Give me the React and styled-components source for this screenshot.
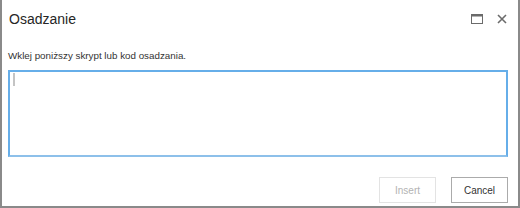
import React from 'react'
import styled, { createGlobalStyle } from 'styled-components'

const Global = createGlobalStyle`
  html, body { margin: 0; padding: 0; background: #fff; }
  body { font-family: "Liberation Sans", Arial, sans-serif; }
`

const Dialog = styled.div`
  box-sizing: border-box;
  width: 520px;
  height: 208px;
  border: 2px solid #8a8a8a;
  border-top: none;
  background: #fff;
  display: flex;
  flex-direction: column;
`

const Header = styled.div`
  display: flex;
  align-items: center;
  justify-content: space-between;
  padding: 6px 10px 0 7px;
  height: 26px;
`

const Title = styled.h1`
  margin: 0;
  font-size: 14px;
  font-weight: 400;
  color: #262626;
`

const Controls = styled.div`
  display: flex;
  align-items: center;
  gap: 13px;
`

const IconBtn = styled.button`
  border: none;
  background: none;
  padding: 0;
  width: 12px;
  height: 12px;
  display: flex;
  align-items: center;
  justify-content: center;
  cursor: pointer;
`

const Body = styled.div`
  flex: 1;
  display: flex;
  flex-direction: column;
  padding: 18px 10px 0 6px;
`

const Label = styled.p`
  margin: 0 0 9px;
  font-size: 9.8px;
  color: #333;
`

const Field = styled.div`
  position: relative;
  box-sizing: border-box;
  height: 87px;
  border: 2px solid #66aee9;
  border-bottom-color: #8dc0ea;
`

const Caret = styled.span`
  position: absolute;
  left: 3px;
  top: 1px;
  width: 2px;
  height: 13px;
  background: #c4c4c4;
`

const Footer = styled.div`
  display: flex;
  justify-content: flex-end;
  gap: 15px;
  padding: 0 10px 3px 0;
`

const Button = styled.button`
  box-sizing: border-box;
  width: ${p => p.$w}px;
  height: 26px;
  background: #fff;
  font-family: "Liberation Sans", Arial, sans-serif;
  font-size: 10px;
  border: 1px solid ${p => (p.disabled ? '#e3e3e3' : '#ababab')};
  color: ${p => (p.disabled ? '#b3b3b3' : '#333')};
  padding: 0;
`

export default function App() {
  return (
    <>
      <Global />
      <Dialog>
        <Header>
          <Title>Osadzanie</Title>
          <Controls>
            <IconBtn aria-label="maximize">
              <svg width="12" height="10" viewBox="0 0 12 10">
                <rect x="0.5" y="0.5" width="11" height="9" fill="none" stroke="#6b6b6b" />
                <rect x="0.5" y="0.5" width="11" height="2" fill="#6b6b6b" />
              </svg>
            </IconBtn>
            <IconBtn aria-label="close">
              <svg width="10" height="10" viewBox="0 0 10 10">
                <path d="M1 1 L9 9 M9 1 L1 9" stroke="#6b6b6b" strokeWidth="1.6" />
              </svg>
            </IconBtn>
          </Controls>
        </Header>
        <Body>
          <Label>Wklej poniższy skrypt lub kod osadzania.</Label>
          <Field>
            <Caret />
          </Field>
        </Body>
        <Footer>
          <Button $w={57} disabled>Insert</Button>
          <Button $w={57}>Cancel</Button>
        </Footer>
      </Dialog>
    </>
  )
}
